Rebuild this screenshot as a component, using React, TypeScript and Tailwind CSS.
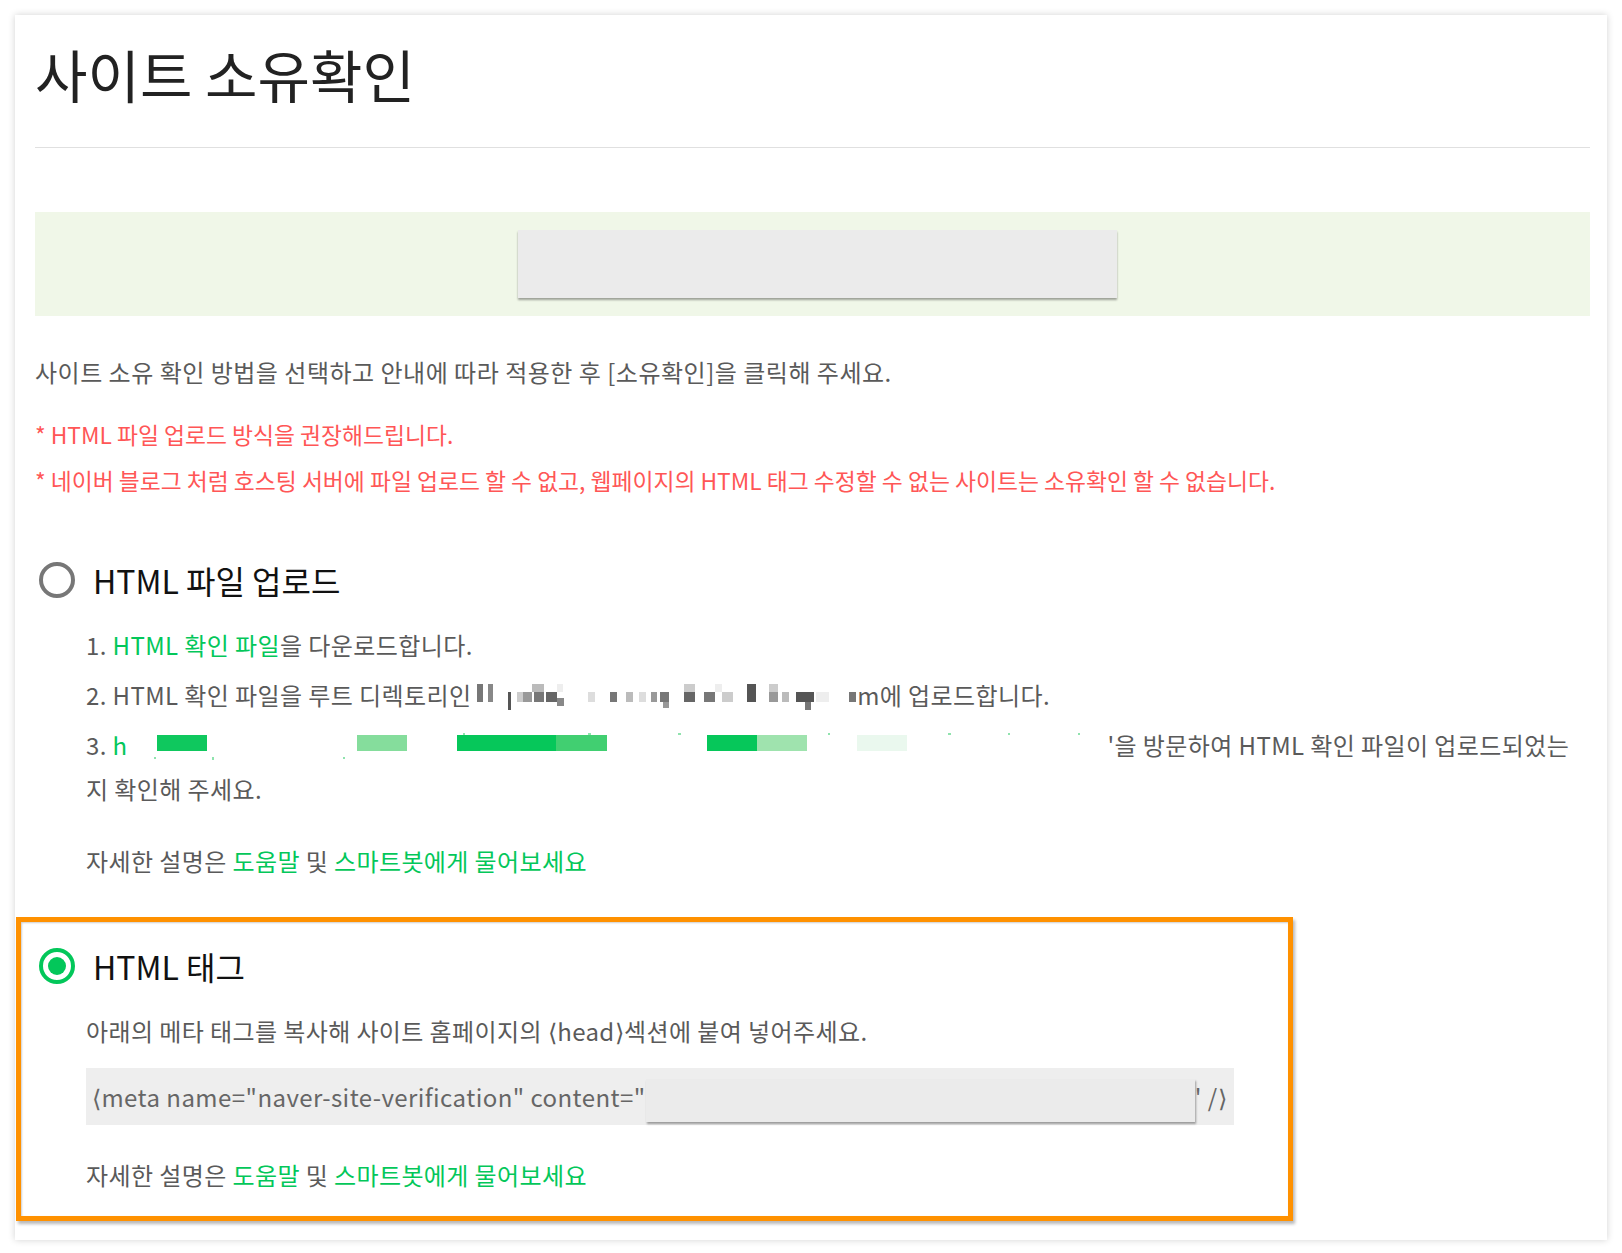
import React from "react";

type Cell = [number, number, number, number, string];

const grayCells: Cell[] = [
  [0, 11, 6, 18, "#777"],
  [11, 11, 5, 18, "#888"],
  [31, 19, 3, 18, "#555"],
  [40, 19, 6, 10, "#ccc"],
  [46, 19, 9, 10, "#999"],
  [55, 11, 12, 8, "#bbb"],
  [57, 19, 10, 10, "#777"],
  [69, 19, 11, 10, "#666"],
  [80, 25, 7, 8, "#888"],
  [80, 11, 6, 8, "#eee"],
  [111, 19, 7, 10, "#ddd"],
  [133, 19, 7, 10, "#777"],
  [149, 19, 7, 10, "#bbb"],
  [162, 19, 7, 10, "#ddd"],
  [174, 19, 6, 10, "#999"],
  [183, 19, 9, 10, "#777"],
  [186, 29, 6, 6, "#999"],
  [207, 11, 11, 8, "#ccc"],
  [207, 19, 11, 10, "#666"],
  [227, 19, 11, 10, "#777"],
  [238, 11, 7, 8, "#eee"],
  [245, 19, 11, 10, "#ccc"],
  [270, 11, 9, 18, "#555"],
  [292, 11, 9, 8, "#ccc"],
  [292, 19, 9, 10, "#999"],
  [305, 19, 7, 10, "#bbb"],
  [319, 19, 18, 10, "#555"],
  [328, 29, 6, 8, "#777"],
  [339, 19, 13, 10, "#eee"],
  [372, 19, 7, 10, "#777"],
];

const greenCells: Cell[] = [
  [29, 12, 50, 16, "#0fc85e"],
  [229, 12, 50, 16, "#85dd9c"],
  [329, 12, 99, 16, "#06c75a"],
  [428, 12, 51, 16, "#41cf71"],
  [579, 12, 50, 16, "#06c75a"],
  [629, 12, 50, 16, "#9fe3ae"],
  [729, 12, 50, 16, "#eaf8ee"],
  [26, 34, 2, 2, "#8fe3ad"],
  [84, 34, 2, 3, "#8fe3ad"],
  [215, 34, 2, 2, "#8fe3ad"],
  [335, 10, 2, 2, "#8fe3ad"],
  [460, 10, 3, 2, "#8fe3ad"],
  [550, 10, 3, 2, "#8fe3ad"],
  [700, 10, 2, 2, "#8fe3ad"],
  [820, 10, 3, 2, "#8fe3ad"],
  [880, 10, 2, 2, "#8fe3ad"],
  [950, 10, 2, 2, "#8fe3ad"],
];

function Mosaic({ cells, width }: { cells: Cell[]; width: number }) {
  return (
    <svg
      width={width}
      height={44}
      viewBox={`0 0 ${width} 44`}
      className="inline-block align-top shrink-0"
    >
      {cells.map(([x, y, w, h, c], i) => (
        <rect key={i} x={x} y={y} width={w} height={h} fill={c} />
      ))}
    </svg>
  );
}

function Help() {
  return (
    <p className="pl-[51px] text-[24px] tracking-[0.4px] leading-[44px] text-[#5a5a5a]">
      자세한 설명은 <span className="text-[#03c75a]">도움말</span> 및{" "}
      <span className="text-[#03c75a]">스마트봇에게 물어보세요</span>
    </p>
  );
}

export default function App() {
  return (
    <div className="min-h-[1253px] bg-white pt-[15px] pl-[15px] [font-family:'Noto_Sans_CJK_KR','Noto_Sans',sans-serif]">
      <div className="w-[1592px] bg-white shadow-[0_0_7px_rgba(0,0,0,0.18)] pl-5 pr-[17px] pt-[22px] pb-[19px]">
        <h1 className="text-[57px] leading-[72px] font-normal text-[#222]">
          사이트 소유확인
        </h1>
        <div className="mt-[38px] h-px bg-[#e0e0e0]" />

        <div className="mt-[64px] h-[104px] bg-[#f0f7e8] flex items-center justify-center pl-[10px]">
          <div className="w-[599px] h-[68px] bg-[#ebebeb] shadow-[0_2px_2px_rgba(0,0,0,0.35)]" />
        </div>

        <p className="mt-[34px] text-[24px] tracking-[0.5px] leading-[44px] text-[#5a5a5a]">
          사이트 소유 확인 방법을 선택하고 안내에 따라 적용한 후 [소유확인]을 클릭해 주세요.
        </p>
        <p className="mt-[18px] text-[22.8px] leading-[46px] text-[#ff5656]">
          * HTML 파일 업로드 방식을 권장해드립니다.
        </p>
        <p className="text-[22.8px] leading-[46px] text-[#ff5656]">
          * 네이버 블로그 처럼 호스팅 서버에 파일 업로드 할 수 없고, 웹페이지의 HTML 태그 수정할 수 없는 사이트는 소유확인 할 수 없습니다.
        </p>

        <div className="mt-[56px] flex items-center h-[40px]">
          <div className="ml-[4px] w-[36px] h-[36px] rounded-full border-[4px] border-[#777]" />
          <span className="ml-[18px] text-[32px] leading-[40px] text-[#111]">
            HTML 파일 업로드
          </span>
        </div>

        <ol className="mt-[23px] pl-[51px] text-[24px] tracking-[0.4px] leading-[44px] text-[#5a5a5a] flex flex-col gap-[6px]">
          <li>
            1. <span className="text-[#03c75a]">HTML 확인 파일</span>을 다운로드합니다.
          </li>
          <li className="flex whitespace-pre">
            <span>2. HTML 확인 파일을 루트 디렉토리인 </span>
            <Mosaic cells={grayCells} width={380} />
            <span>m에 업로드합니다.</span>
          </li>
          <li>
            <div className="flex whitespace-pre">
              <span>3. </span>
              <span className="text-[#03c75a]">h</span>
              <Mosaic cells={greenCells} width={980} />
              <span>'을 방문하여 HTML 확인 파일이 업로드되었는</span>
            </div>
            <div>지 확인해 주세요.</div>
          </li>
        </ol>

        <div className="mt-[28px]">
          <Help />
        </div>

        <div className="mt-[34px] -ml-[19px] w-[1277px] border-[5px] border-[#ff9100] pl-[14px] pt-[24px] pb-[19px] shadow-[2px_3px_3px_rgba(0,0,0,0.28),inset_1px_1px_2px_rgba(0,0,0,0.2)]">
          <div className="flex items-center h-[40px]">
            <div className="ml-[4px] w-[36px] h-[36px] rounded-full border-[4px] border-[#03c75a] flex items-center justify-center">
              <div className="w-[18px] h-[18px] rounded-full bg-[#03c75a]" />
            </div>
            <span className="ml-[18px] text-[32px] leading-[40px] text-[#111]">
              HTML 태그
            </span>
          </div>

          <p className="mt-[23px] pl-[51px] text-[24px] tracking-[0.4px] leading-[44px] text-[#5a5a5a]">
            아래의 메타 태그를 복사해 사이트 홈페이지의 ⟨head⟩섹션에 붙여 넣어주세요.
          </p>

          <div className="mt-[15px] ml-[51px] w-[1148px] h-[57px] bg-[#eeeeee] flex items-center pl-[6px] text-[24px] tracking-[0.45px] text-[#666] whitespace-pre">
            <span>⟨meta name="naver-site-verification" content="</span>
            <div className="mt-[8px] w-[549px] h-[43px] bg-[#ebebeb] shadow-[1px_2px_2px_rgba(0,0,0,0.35)] shrink-0" />
            <span>' /⟩</span>
          </div>

          <div className="mt-[28px]">
            <Help />
          </div>
        </div>
      </div>
    </div>
  );
}
